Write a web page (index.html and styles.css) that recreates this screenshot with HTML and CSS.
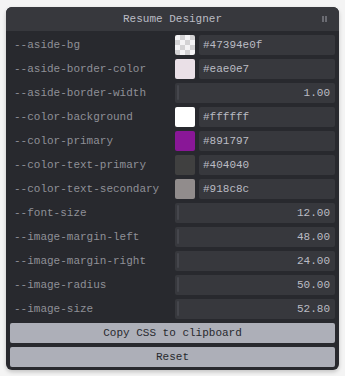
FILE: index.html
```html
<!DOCTYPE html>
<html lang="en">
<head>
  <meta charset="UTF-8">
  <meta name="viewport" content="width=device-width, initial-scale=1.0">
  <title>Resume Designer</title>
  <link rel="stylesheet" href="styles.css">
</head>
<body>

  <div class="pane">
    <div class="pane-title">
      <span>Resume Designer</span>
      <i class="pane-mark"></i>
    </div>
    <div class="pane-body">
      <div class="row">
        <label>--aside-bg</label>
        <div class="color">
          <span class="swatch checker"><span style="background: #47394e0f"></span></span>
          <div class="field">#47394e0f</div>
        </div>
      </div>
      <div class="row">
        <label>--aside-border-color</label>
        <div class="color">
          <span class="swatch" style="background: #eae0e7"></span>
          <div class="field">#eae0e7</div>
        </div>
      </div>
      <div class="row">
        <label>--aside-border-width</label>
        <div class="field number">1.00</div>
      </div>
      <div class="row">
        <label>--color-background</label>
        <div class="color">
          <span class="swatch" style="background: #ffffff"></span>
          <div class="field">#ffffff</div>
        </div>
      </div>
      <div class="row">
        <label>--color-primary</label>
        <div class="color">
          <span class="swatch" style="background: #891797"></span>
          <div class="field">#891797</div>
        </div>
      </div>
      <div class="row">
        <label>--color-text-primary</label>
        <div class="color">
          <span class="swatch" style="background: #404040"></span>
          <div class="field">#404040</div>
        </div>
      </div>
      <div class="row">
        <label>--color-text-secondary</label>
        <div class="color">
          <span class="swatch" style="background: #918c8c"></span>
          <div class="field">#918c8c</div>
        </div>
      </div>
      <div class="row">
        <label>--font-size</label>
        <div class="field number">12.00</div>
      </div>
      <div class="row">
        <label>--image-margin-left</label>
        <div class="field number">48.00</div>
      </div>
      <div class="row">
        <label>--image-margin-right</label>
        <div class="field number">24.00</div>
      </div>
      <div class="row">
        <label>--image-radius</label>
        <div class="field number">50.00</div>
      </div>
      <div class="row">
        <label>--image-size</label>
        <div class="field number">52.80</div>
      </div>
      <button class="btn">Copy CSS to clipboard</button>
      <button class="btn">Reset</button>
    </div>
  </div>

</body>
</html>
```

FILE: styles.css
```css
* { margin: 0; padding: 0; box-sizing: border-box; }
body { font-family: 'Courier New', Courier, 'Nimbus Mono PS', FreeMono, monospace; font-size: 11px; background-color: #f4f4f4; padding: 7px 6px; }
.pane { width: 333px; background: #28292e; border-radius: 6px; box-shadow: 0 2px 4px rgba(0, 0, 0, 0.2); overflow: hidden; }
.pane-title { position: relative; height: 24px; background: #37383d; color: #bbbcc4; display: flex; align-items: center; justify-content: center; }
.pane-mark { position: absolute; right: 12px; top: 9px; width: 5px; height: 6px; border-left: 2px solid #6a6b72; border-right: 2px solid #6a6b72; }
.pane-body { padding: 4px 4px 3px; display: flex; flex-direction: column; gap: 4px; }
.row { display: grid; grid-template-columns: 1fr 160px; height: 20px; align-items: center; }
.row label { padding-left: 4px; color: #8f9097; white-space: nowrap; }
.color { display: flex; gap: 4px; height: 20px; }
.swatch { width: 20px; height: 20px; border-radius: 2px; flex: none; overflow: hidden; }
.swatch span { display: block; width: 100%; height: 100%; }
.checker { background: repeating-conic-gradient(#dcdcdc 0% 25%, #ffffff 0% 50%) 0 0 / 10px 10px; }
.field { flex: 1; height: 20px; line-height: 20px; padding: 0 4px; background: #37383d; color: #bbbcc4; border-radius: 2px; }
.field.number { position: relative; text-align: right; padding-right: 5px; }
.field.number::before { content: ''; position: absolute; left: 2px; top: 2px; bottom: 3px; width: 2px; border-radius: 1px; background: #45464c; }
.btn { height: 20px; border: none; border-radius: 2px; background: #adafb8; color: #28292e; font-family: inherit; font-size: 11px; cursor: pointer; }
```
